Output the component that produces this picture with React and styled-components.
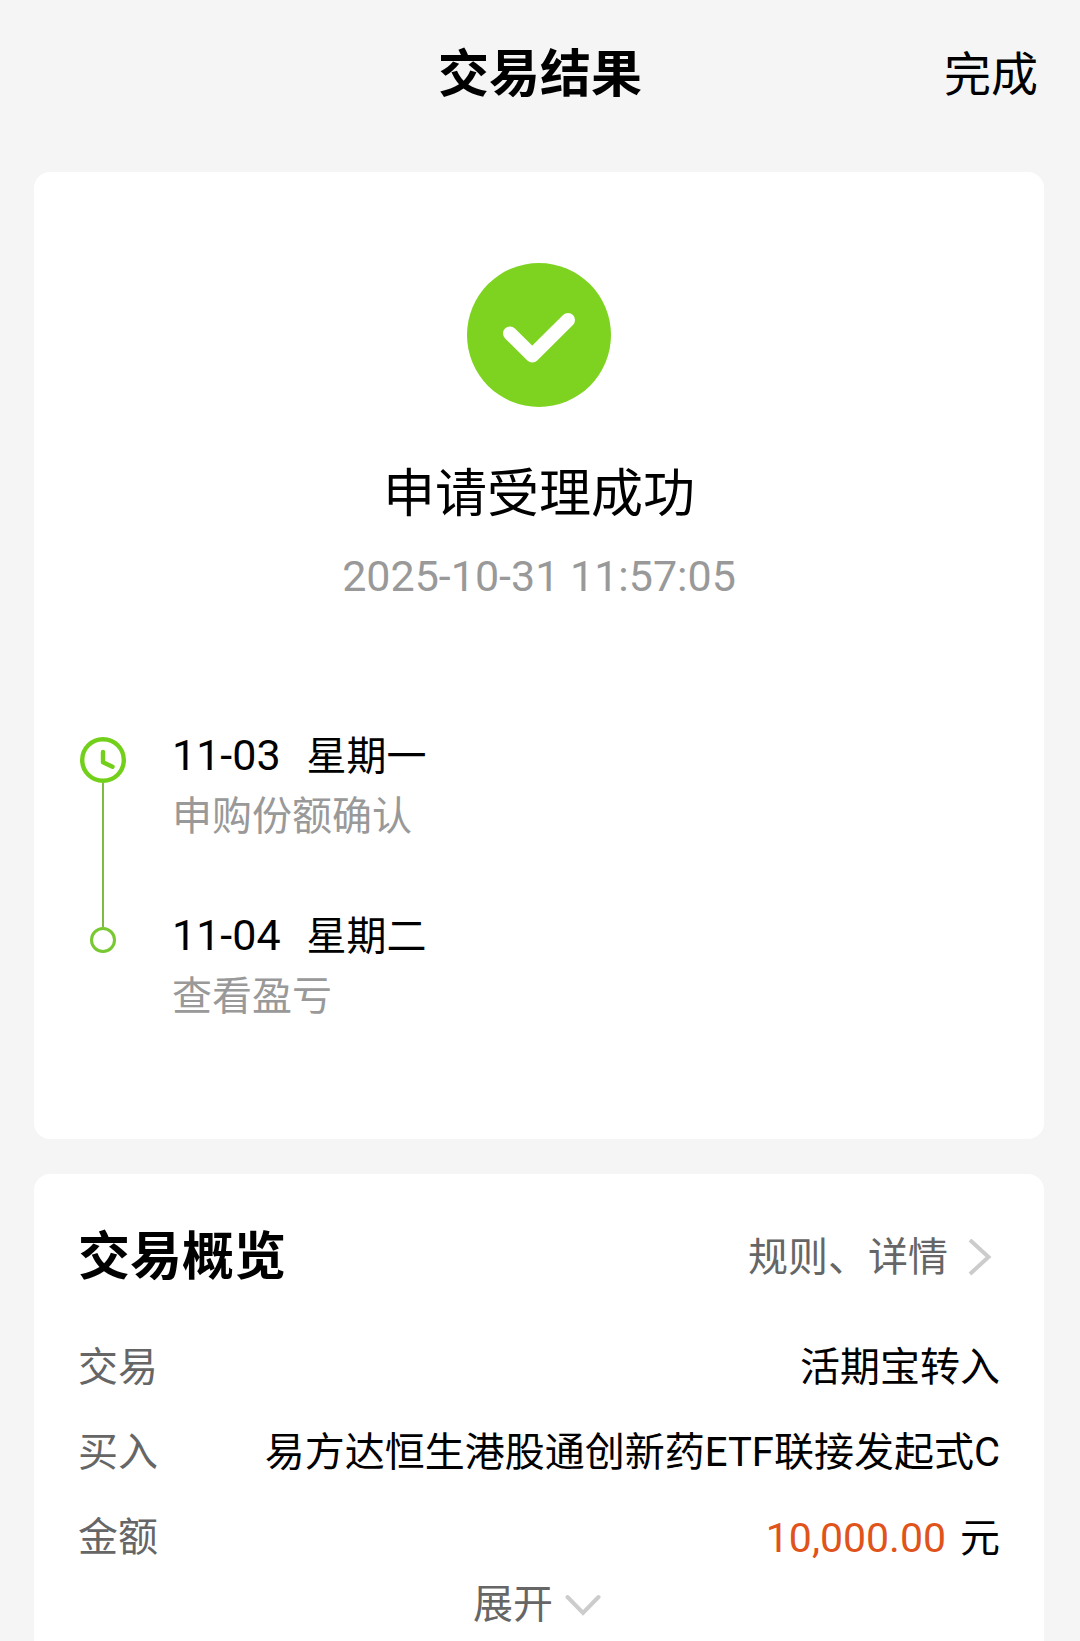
import React from 'react';
import styled, { createGlobalStyle } from 'styled-components';

const steps = [
  { date: '11-03', day: '星期一', text: '申购份额确认' },
  { date: '11-04', day: '星期二', text: '查看盈亏' },
];

export default function App() {
  return (
    <>
      <GlobalStyle />
      <StyledPage lang='zh-CN'>
        <StyledHeader>
          <h1>交易结果</h1>
          <DoneButton type='button'>完成</DoneButton>
        </StyledHeader>
        <StyledMain>
          <ResultCard>
            <StyledResult>
              <SuccessIcon />
              <h2>申请受理成功</h2>
              <time dateTime='2025-10-31T11:57:05'>2025-10-31 11:57:05</time>
            </StyledResult>
            <StyledTimeline>
              {steps.map((step, i) => (
                <StyledStep key={step.date}>
                  <StyledRail $first={i === 0}>
                    {i > 0 && <LeadLine />}
                    {i === 0 ? <ClockIcon /> : <StyledDot />}
                    {i < steps.length - 1 && <StyledLine />}
                  </StyledRail>
                  <StepText>
                    <StepDate>
                      <Digits>{step.date}</Digits>
                      <span>{step.day}</span>
                    </StepDate>
                    <p>{step.text}</p>
                  </StepText>
                </StyledStep>
              ))}
            </StyledTimeline>
          </ResultCard>

          <OverviewCard>
            <OverviewHeader>
              <h2>交易概览</h2>
              <DetailLink href='#detail'>
                规则、详情
                <ChevronRight />
              </DetailLink>
            </OverviewHeader>
            <dl>
              <StyledRow>
                <dt>交易</dt>
                <dd>活期宝转入</dd>
              </StyledRow>
              <StyledRow>
                <dt>买入</dt>
                <dd>易方达恒生港股通创新药ETF联接发起式C</dd>
              </StyledRow>
              <StyledRow>
                <dt>金额</dt>
                <dd>
                  <StyledAmount>10,000.00</StyledAmount>元
                </dd>
              </StyledRow>
            </dl>
            <ExpandButton type='button'>
              展开
              <ChevronDown />
            </ExpandButton>
          </OverviewCard>
        </StyledMain>
      </StyledPage>
    </>
  );
}

function SuccessIcon() {
  return (
    <svg width='144' height='144' viewBox='0 0 144 144' aria-hidden='true'>
      <circle cx='72' cy='72' r='72' fill='#7ed321' />
      <path
        d='M43 70.5 65.3 92.5 101 57'
        fill='none'
        stroke='#fff'
        strokeWidth='14'
        strokeLinecap='round'
        strokeLinejoin='round'
      />
    </svg>
  );
}

function ClockIcon() {
  return (
    <svg width='46' height='46' viewBox='0 0 46 46' aria-hidden='true'>
      <g
        fill='none'
        stroke='#73d01a'
        strokeWidth='4.4'
        strokeLinecap='round'
        strokeLinejoin='round'
      >
        <circle cx='23' cy='23' r='20.8' />
        <path d='M23 15v10.2l9.5 4.6' />
      </g>
    </svg>
  );
}

function ChevronRight() {
  return (
    <svg width='24' height='38' viewBox='0 0 24 38' aria-hidden='true'>
      <path d='M2 1 20.5 18 2 35' fill='none' stroke='#ccc' strokeWidth='4' />
    </svg>
  );
}

function ChevronDown() {
  return (
    <svg width='36' height='22' viewBox='0 0 36 22' aria-hidden='true'>
      <path
        d='M2.5 3 18 19 33.5 3'
        fill='none'
        stroke='#ccc'
        strokeWidth='4'
        strokeLinecap='round'
      />
    </svg>
  );
}

const GlobalStyle = createGlobalStyle`
  * {
    box-sizing: border-box;
    margin: 0;
    padding: 0;
  }

  body {
    background: #f5f5f5;
    color: #000;
    font-family: Roboto, 'Noto Sans CJK SC', sans-serif;
    font-size: 40px;
    line-height: 60px;
  }

  button {
    border: 0;
    background: none;
    color: inherit;
    font: inherit;
    cursor: pointer;
  }

  svg {
    display: block;
    flex: none;
  }
`;

const StyledPage = styled.div`
  min-height: 100vh;
  display: flex;
  flex-direction: column;
`;

const StyledHeader = styled.header`
  display: grid;
  grid-template-columns: 1fr auto 1fr;
  align-items: center;
  height: 150px;
  padding: 0 42px;

  h1 {
    grid-column: 2;
    font-size: 51px;
    font-weight: 700;
  }
`;

const DoneButton = styled.button`
  && {
    justify-self: end;
    font-size: 47px;
  }
`;

const StyledMain = styled.main`
  flex: 1;
  display: flex;
  flex-direction: column;
  gap: 35px;
  padding: 22px 36px 0 34px;
`;

const StyledCard = styled.section`
  padding: 0 44px;
  border-radius: 16px;
  background: #fff;
`;

const ResultCard = styled(StyledCard)`
  padding-top: 91px;
  padding-bottom: 112px;
`;

const OverviewCard = styled(StyledCard)`
  flex: 1;
  padding-top: 54px;
  border-radius: 16px 16px 0 0;
`;

const StyledResult = styled.div`
  display: flex;
  flex-direction: column;
  align-items: center;

  h2 {
    margin-top: 58px;
    font-size: 52px;
    font-weight: 400;
  }

  time {
    margin-top: 21px;
    color: #999;
    font-size: 43px;
  }
`;

const StyledTimeline = styled.ol`
  margin-top: 121px;
  padding-left: 2px;
  list-style: none;
`;

const StyledStep = styled.li`
  display: flex;
  gap: 46px;

  &:not(:last-child) > div:last-child {
    padding-bottom: 60px;
  }
`;

const StyledRail = styled.div`
  display: flex;
  flex-direction: column;
  align-items: center;
  width: 46px;
  padding-top: ${({ $first }) => ($first ? '10px' : '0')};
`;

const StyledLine = styled.span`
  flex: 1;
  width: 2px;
  background: #7dbb42;
`;

const LeadLine = styled(StyledLine)`
  flex: 0 0 20px;
`;

const StyledDot = styled.span`
  width: 26px;
  height: 26px;
  border: 3px solid #78c832;
  border-radius: 50%;
`;

const StepText = styled.div`
  p {
    color: #999;
  }
`;

const StepDate = styled.h3`
  display: flex;
  align-items: baseline;
  gap: 26px;
  height: 60px;
  font-size: 40px;
  font-weight: 400;
  line-height: 56px;
`;

const Digits = styled.span`
  font-size: 43px;
`;

const OverviewHeader = styled.div`
  display: flex;
  align-items: center;
  justify-content: space-between;
  margin-bottom: 50px;

  h2 {
    font-size: 52px;
    font-weight: 700;
  }
`;

const DetailLink = styled.a`
  display: flex;
  align-items: center;
  gap: 20px;
  padding-right: 8px;
  color: #666;
  text-decoration: none;
`;

const StyledRow = styled.div`
  display: flex;
  justify-content: space-between;
  margin-top: 25px;

  &:first-child {
    margin-top: 0;
  }

  dt {
    flex: none;
    color: #666;
  }

  dd {
    text-align: right;
  }
`;

const StyledAmount = styled.span`
  margin-right: 14px;
  color: #e0531a;
  font-size: 41px;
`;

const ExpandButton = styled.button`
  && {
    display: flex;
    align-items: center;
    gap: 12px;
    margin: 6px auto 0;
    padding-right: 4px;
    color: #666;
  }
`;
